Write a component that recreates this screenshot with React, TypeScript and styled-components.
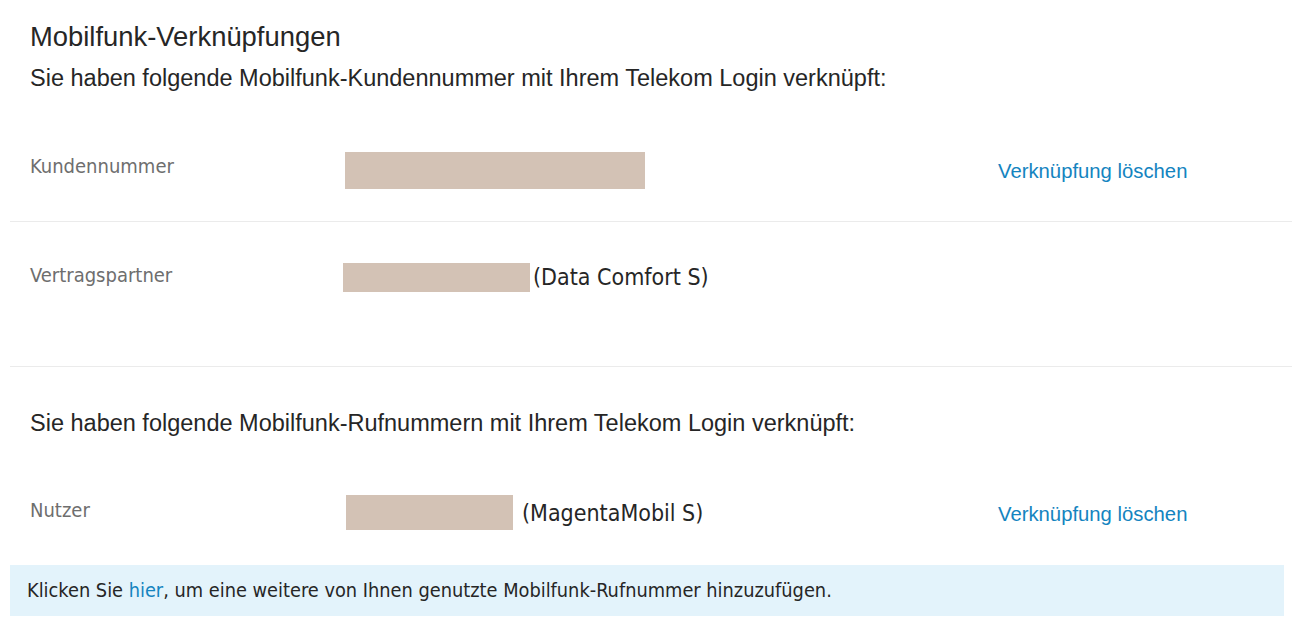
import React from "react";
import styled, { createGlobalStyle } from "styled-components";

const GlobalStyle = createGlobalStyle`
  html, body { margin: 0; padding: 0; background: #ffffff; }
  body { font-family: "Liberation Sans", Arial, sans-serif; color: #262626; }
`;

const Page = styled.div`
  width: 1292px;
  padding-left: 10px;
  box-sizing: border-box;
`;

const Header = styled.div`
  padding: 21px 0 0 20px;
`;

const Title = styled.h1`
  margin: 0;
  font-family: "Liberation Sans", Arial, sans-serif;
  font-weight: 400;
  font-size: 27.4px;
  line-height: 32px;
  color: #262626;
`;

const Lead = styled.p<{ $top: number }>`
  margin: ${(p) => p.$top}px 0 0 0;
  font-family: "Liberation Sans", Arial, sans-serif;
  font-size: 23.5px;
  line-height: 28px;
  color: #262626;
`;

const Row = styled.div<{ $top: number; $bottom: number; $divider?: boolean }>`
  display: grid;
  grid-template-columns: 315px 653px 1fr;
  align-items: start;
  padding: ${(p) => p.$top}px 0 ${(p) => p.$bottom}px 20px;
  border-bottom: ${(p) => (p.$divider ? "1px solid #ebebeb" : "none")};
`;

const Label = styled.div<{ $offset: number }>`
  padding-top: ${(p) => p.$offset}px;
  font-family: "DejaVu Sans Condensed", "DejaVu Sans", sans-serif;
  font-stretch: condensed;
  font-size: 20px;
  line-height: 24px;
  color: #6e6e6e;
`;

const Value = styled.div`
  display: flex;
  align-items: center;
  font-family: "DejaVu Sans Condensed", "DejaVu Sans", sans-serif;
  font-stretch: condensed;
  font-size: 23px;
  line-height: 30px;
  color: #262626;
`;

const Redacted = styled.span<{ $w: number; $h: number; $shift: number; $gap: number }>`
  display: inline-block;
  width: ${(p) => p.$w}px;
  height: ${(p) => p.$h}px;
  margin-left: ${(p) => p.$shift}px;
  margin-right: ${(p) => p.$gap}px;
  background: #d3c2b5;
`;

const Action = styled.a<{ $offset: number }>`
  padding-top: ${(p) => p.$offset}px;
  font-family: "Liberation Sans", Arial, sans-serif;
  font-size: 20.3px;
  line-height: 24px;
  color: #1484c0;
  text-decoration: none;
  cursor: pointer;
`;

const Notice = styled.div`
  margin: 35px 8px 0 0;
  background: #e3f3fb;
  height: 51px;
  display: flex;
  align-items: center;
  padding-left: 17px;
  font-family: "DejaVu Sans Condensed", "DejaVu Sans", sans-serif;
  font-stretch: condensed;
  font-size: 19.8px;
  color: #262626;
`;

const InlineLink = styled.a`
  color: #1484c0;
  text-decoration: none;
`;

export default function App() {
  return (
    <>
      <GlobalStyle />
      <Page>
        <Header>
          <Title>Mobilfunk-Verknüpfungen</Title>
          <Lead $top={11}>
            Sie haben folgende Mobilfunk-Kundennummer mit Ihrem Telekom Login verknüpft:
          </Lead>
        </Header>
        <Row $top={60} $bottom={32} $divider>
          <Label $offset={2}>Kundennummer</Label>
          <Value>
            <Redacted $w={300} $h={37} $shift={0} $gap={0} />
          </Value>
          <Action $offset={7}>Verknüpfung löschen</Action>
        </Row>
        <Row $top={40} $bottom={74} $divider>
          <Label $offset={1}>Vertragspartner</Label>
          <Value>
            <Redacted $w={187} $h={29} $shift={-2} $gap={3} />
            (Data Comfort S)
          </Value>
          <span />
        </Row>
        <Header>
          <Lead $top={21}>
            Sie haben folgende Mobilfunk-Rufnummern mit Ihrem Telekom Login verknüpft:
          </Lead>
        </Header>
        <Row $top={58} $bottom={0}>
          <Label $offset={3}>Nutzer</Label>
          <Value>
            <Redacted $w={167} $h={35} $shift={1} $gap={9} />
            (MagentaMobil S)
          </Value>
          <Action $offset={7}>Verknüpfung löschen</Action>
        </Row>
        <Notice>
          <span>
            Klicken Sie <InlineLink>hier</InlineLink>, um eine weitere von Ihnen genutzte
            Mobilfunk-Rufnummer hinzuzufügen.
          </span>
        </Notice>
      </Page>
    </>
  );
}
